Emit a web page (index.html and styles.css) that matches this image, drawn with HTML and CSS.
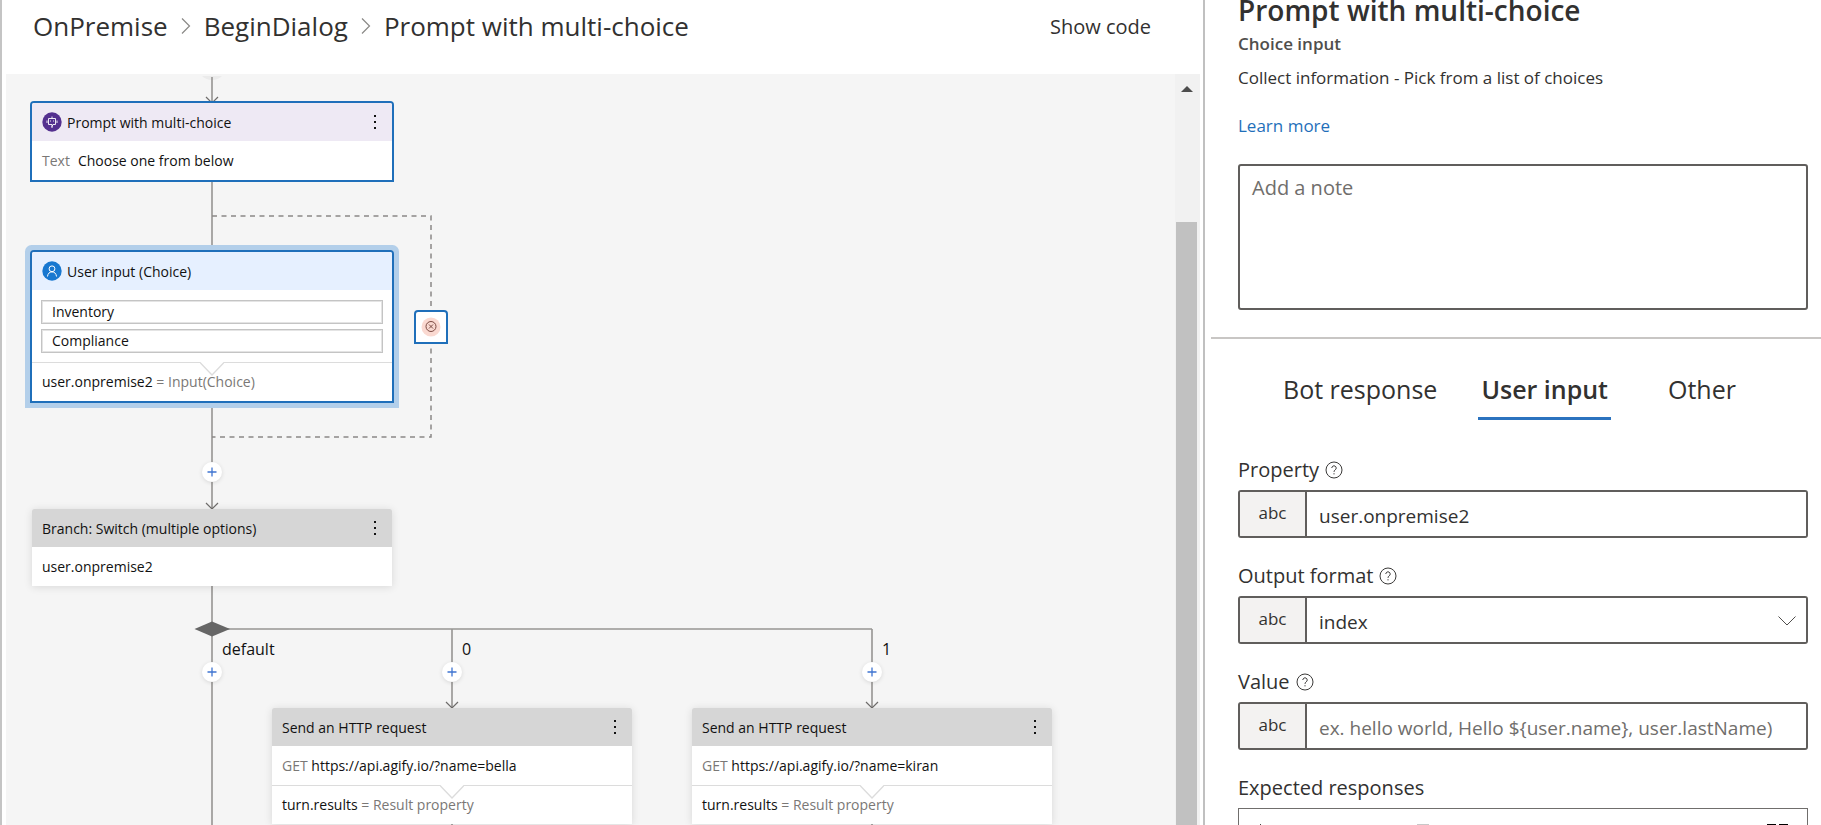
FILE: index.html
```html
<!DOCTYPE html>
<html lang="en">
<head>
<meta charset="utf-8">
<title>Prompt with multi-choice</title>
<link rel="stylesheet" href="styles.css">
</head>
<body>
<svg class="defs" aria-hidden="true">
  <symbol id="dots" viewBox="0 0 4 16"><path d="M1 1h2v2H1zM1 7h2v2H1zM1 13h2v2H1z" fill="#111"/></symbol>
  <symbol id="notch" viewBox="0 0 24 14"><path d="M0 0H24L12 13z" fill="#fff"/><path d="M0 .5L12 13L24 .5" fill="none" stroke="#dcdcdc" stroke-width="1.3"/></symbol>
  <symbol id="help" viewBox="0 0 18 18"><circle cx="9" cy="9" r="8" fill="none" stroke="#3b3a39"/><path d="M6.8 7a2.2 2.2 0 1 1 3.5 1.8C9.400 9.400 9 9.800 9 10.900M9 12.200v1.200" fill="none" stroke="#3b3a39"/></symbol>
  <symbol id="plus" viewBox="0 0 10 10"><path d="M5 .5v9M.5 5h9" stroke="#3f74d1" stroke-width="1.3"/></symbol>
  <symbol id="chevron" viewBox="0 0 10 18"><path d="M1 1.500L8.500 9L1 16.500" fill="none" stroke="#8a8886" stroke-width="1.200"/></symbol>
</svg>
<div class="app">
  <main class="editor">
    <header class="topbar">
      <nav class="crumbs" aria-label="Breadcrumb">
        <a href="#">OnPremise</a>
        <svg class="chevron"><use href="#chevron"/></svg>
        <a href="#">BeginDialog</a>
        <svg class="chevron"><use href="#chevron"/></svg>
        <a href="#">Prompt with multi-choice</a>
      </nav>
      <button class="showcode" type="button">Show code</button>
    </header>
    <div class="canvas">
      <div class="flow">
        <svg class="wires" viewBox="6 74 1100 751" width="1100" height="751" aria-hidden="true">
          <path d="M202 76h20q-4 4-10 4t-10-4z" fill="#ebebeb"/>
          <g fill="none" stroke="#979593" stroke-width="1.6">
            <path d="M212 77V101M212 182V252M212 401V509M212 586V825M212 629H872M452 629V708M872 629V708M452 823v2M872 823v2"/>
            <path d="M206 97l6 6l6-6M206 503l6 6l6-6M446 702l6 6l6-6M866 702l6 6l6-6" stroke="#706e6c" stroke-width="1.2"/>
            <path d="M212 216H431V437H212" stroke="#8a8886" stroke-dasharray="5 4.500" stroke-width="1.500"/>
          </g>
          <path d="M194.500 629L212 621.500L230 629L212 636.500z" fill="#666"/>
        </svg>

        <article class="node selected n-prompt">
          <div class="head purple">
            <svg class="badge" viewBox="0 0 20 20"><circle cx="10" cy="10" r="9.700" fill="#54308f"/><g fill="none" stroke="#fff" stroke-width=".9"><path d="M6.500 6.500h7v6h-2.500L10 14.500v-2H6.500zM10 6.500V4.500M5 8.500v2.500M15 8.500v2.500M10 14v2M8.500 8.500v1M11.500 8.500v1"/></g></svg>
            <span>Prompt with multi-choice</span>
            <button class="menu" type="button" aria-label="More options"><svg><use href="#dots"/></svg></button>
          </div>
          <p class="row"><span class="dim wide">Text</span>Choose one from below</p>
        </article>

        <article class="node selected focused n-input">
          <div class="head blue">
            <svg class="badge" viewBox="0 0 20 20"><circle cx="10" cy="10" r="9.700" fill="#1878d0"/><g fill="none" stroke="#fff" stroke-width="1"><circle cx="10" cy="7.800" r="2.900"/><path d="M5.500 15.500c.3-3 2-4.600 4.500-4.600s4.200 1.600 4.500 4.600"/></g></svg>
            <span>User input (Choice)</span>
          </div>
          <ul class="choices"><li>Inventory</li><li>Compliance</li></ul>
          <p class="row foot"><svg class="notch"><use href="#notch"/></svg>user.onpremise2 <span class="dim">= Input(Choice)</span></p>
        </article>

        <button class="node selected n-error" type="button" aria-label="Invalid prompt">
          <svg viewBox="0 0 20 20"><circle cx="10" cy="10" r="9.500" fill="#fad9d1"/><g fill="none" stroke="#7a4a42" stroke-width="1"><circle cx="10" cy="9.500" r="5"/><path d="M8 7.500l4 4M12 7.500l-4 4"/></g></svg>
        </button>

        <article class="node n-switch">
          <div class="head gray"><span>Branch: Switch (multiple options)</span>
            <button class="menu" type="button" aria-label="More options"><svg><use href="#dots"/></svg></button></div>
          <p class="row">user.onpremise2</p>
        </article>

        <button class="add a-main" type="button" aria-label="Add"><svg><use href="#plus"/></svg></button>
        <button class="add a-default" type="button" aria-label="Add"><svg><use href="#plus"/></svg></button>
        <button class="add a-zero" type="button" aria-label="Add"><svg><use href="#plus"/></svg></button>
        <button class="add a-one" type="button" aria-label="Add"><svg><use href="#plus"/></svg></button>
        <span class="case c-default">default</span>
        <span class="case c-zero">0</span>
        <span class="case c-one">1</span>

        <article class="node n-bella">
          <div class="head gray"><span>Send an HTTP request</span>
            <button class="menu" type="button" aria-label="More options"><svg><use href="#dots"/></svg></button></div>
          <p class="row"><span class="dim">GET</span> https://api.agify.io/?name=bella</p>
          <p class="row foot"><svg class="notch"><use href="#notch"/></svg>turn.results <span class="dim">= Result property</span></p>
        </article>
        <article class="node n-kiran">
          <div class="head gray"><span>Send an HTTP request</span>
            <button class="menu" type="button" aria-label="More options"><svg><use href="#dots"/></svg></button></div>
          <p class="row"><span class="dim">GET</span> https://api.agify.io/?name=kiran</p>
          <p class="row foot"><svg class="notch"><use href="#notch"/></svg>turn.results <span class="dim">= Result property</span></p>
        </article>
      </div>
      <div class="scrollbar" aria-hidden="true">
        <svg class="up" viewBox="0 0 12 6"><path d="M0 6L6 0L12 6z" fill="#4d4d4d"/></svg>
        <div class="thumb"></div>
      </div>
    </div>
  </main>

  <aside class="panel">
    <section class="intro">
      <h1>Prompt with multi-choice</h1>
      <h2>Choice input</h2>
      <p>Collect information - Pick from a list of choices</p>
      <a class="learn" href="#">Learn more</a>
      <textarea class="note" placeholder="Add a note" aria-label="Add a note"></textarea>
    </section>
    <div class="tabs" role="tablist">
      <button type="button" role="tab">Bot response</button>
      <button type="button" role="tab" class="active" aria-selected="true">User input</button>
      <button type="button" role="tab">Other</button>
    </div>
    <form class="form">
      <div class="field">
        <div class="label"><label for="property">Property</label><svg><use href="#help"/></svg></div>
        <div class="box"><span class="type">abc</span><input id="property" type="text" value="user.onpremise2"></div>
      </div>
      <div class="field">
        <div class="label"><label for="format">Output format</label><svg><use href="#help"/></svg></div>
        <div class="box"><span class="type">abc</span><select id="format"><option>index</option><option>value</option></select>
          <svg class="caret" viewBox="0 0 18 10"><path d="M.5 .5L9 9L17.500 .5" fill="none" stroke="#504e4c"/></svg></div>
      </div>
      <div class="field">
        <div class="label"><label for="value">Value</label><svg><use href="#help"/></svg></div>
        <div class="box"><span class="type">abc</span><input id="value" type="text" placeholder="ex. hello world, Hello ${user.name}, user.lastName)"></div>
      </div>
      <div class="field">
        <div class="label"><span>Expected responses</span></div>
        <div class="responses">
          <svg class="tool left" viewBox="0 0 172 16"><path d="M2 0h1v12H2z" fill="#444"/><path d="M159 0h12v12h-12z" fill="#c8c8c8"/></svg>
          <svg class="tool" viewBox="0 0 22 22"><path d="M0 0h9v9H0zM12 0h9v9h-9zM0 12h9v9H0zM12 12h9v9h-9z"/></svg>
        </div>
      </div>
    </form>
  </aside>
</div>
</body>
</html>
```
FILE: styles.css
```css
* { box-sizing: border-box; }
body { margin: 0; font-family: "Open Sans", "Noto Sans", sans-serif; color: #323130; background: #fff; }
button, input, select, textarea { font: inherit; color: inherit; }
button { padding: 0; border: 0; background: none; }
a { color: inherit; text-decoration: none; }
h1, h2, p, ul { margin: 0; padding: 0; }
svg { display: block; flex: none; }
.defs { position: absolute; width: 0; height: 0; }

.app { display: grid; grid-template-columns: 1203fr 618fr; height: 100vh; overflow: hidden; }

.editor { display: flex; flex-direction: column; min-width: 0; border-left: 2px solid #c4c4c4; padding: 0 3px 0 4px; }
.topbar { display: flex; align-items: center; justify-content: space-between; flex: none; height: 74px; padding: 0 49px 22px 27px; }
.crumbs { display: flex; align-items: center; font-size: 26px; line-height: 32px; }
.chevron { width: 10px; height: 18px; margin: 0 13px; }
.showcode { font-size: 20px; }

.canvas { display: flex; flex: 1; min-height: 0; background: #f5f5f5; }
.flow { position: relative; flex: 1; min-width: 0; overflow: hidden; font-size: 14px; color: #111; }
.wires { position: absolute; left: 0; top: 0; }
.scrollbar { display: flex; flex-direction: column; align-items: center; flex: none; width: 25px; padding: 12px 2px 0 0; background: #f1f1f1; }
.up { width: 12px; height: 6px; }
.thumb { flex: 1; width: 21px; margin-top: 130px; background: #c1c1c1; }

.node { position: absolute; width: 360px; background: #fff; border-radius: 2px 2px 0 0; box-shadow: 0 1px 8px rgba(0, 0, 0, .12); }
.selected { border-radius: 2px 2px 0 0; box-shadow: 0 0 0 2px #1f6fba; }
.focused { box-shadow: 0 0 0 2px #1f6fba, 0 0 0 7px #b3cfea; }
.head { display: flex; align-items: center; height: 38px; padding: 0 10px; border-radius: 2px 2px 0 0; }
.purple { background: #eee9f4; }
.blue { background: #e6f0ff; }
.gray { background: #d6d6d6; }
.badge { width: 20px; height: 20px; margin-right: 5px; }
.menu { display: flex; justify-content: center; width: 14px; margin-left: auto; }
.menu svg { width: 4px; height: 16px; }
.row { position: relative; height: 39px; padding: 0 10px; line-height: 39px; white-space: nowrap; }
.foot { border-top: 1px solid #dcdcdc; line-height: 38px; }
.notch { position: absolute; left: 168px; top: -1px; width: 24px; height: 14px; }
.dim { color: #7a7876; }
.wide { margin-right: 8px; }
.choices { display: grid; gap: 5px; padding: 10px 9px 9px; list-style: none; }
.choices li { height: 24px; padding: 0 10px; border: 1px solid #c4c4c4; outline: 1px solid #e4e4e4; outline-offset: -2px; line-height: 22px; }

.n-prompt { left: 26px; top: 29px; }
.n-input { left: 26px; top: 178px; }
.n-error { display: grid; place-items: center; left: 410px; top: 238px; width: 30px; height: 30px; }
.n-error svg { width: 20px; height: 20px; }
.n-switch { left: 26px; top: 435px; }
.n-bella { left: 266px; top: 634px; }
.n-kiran { left: 686px; top: 634px; }

.add { position: absolute; display: grid; place-items: center; width: 20px; height: 20px; border-radius: 50%; background: #fff; box-shadow: 0 1px 4px rgba(0, 0, 0, .12); }
.add svg { width: 10px; height: 10px; }
.a-main { left: 196px; top: 388px; }
.a-default { left: 196px; top: 588px; }
.a-zero { left: 436px; top: 588px; }
.a-one { left: 856px; top: 588px; }
.case { position: absolute; top: 564px; font-size: 16px; line-height: 22px; }
.c-default { left: 216px; }
.c-zero { left: 456px; }
.c-one { left: 876px; }

.panel { min-width: 0; overflow: hidden; border-left: 2px solid #c0c0c0; padding-left: 6px; }
.intro { display: flex; flex-direction: column; align-items: flex-start; padding: 0 13px 27px 27px; border-bottom: 2px solid #c8c6c4; font-size: 17px; line-height: 24px; }
h1 { font-size: 28px; font-weight: 600; line-height: 20px; }
h2 { margin-top: 12px; font-size: 17px; font-weight: 600; line-height: 24px; color: #504e4c; }
.intro p { margin-top: 10px; }
.learn { margin-top: 24px; color: #1f6fba; }
.note { width: 100%; height: 146px; margin-top: 26px; padding: 8px 12px; border: 2px solid #605e5c; border-radius: 3px; font-size: 20px; line-height: 28px; resize: none; }
::placeholder { color: #706e6c; opacity: 1; }
.tabs { display: flex; gap: 41px; padding: 26px 0 0 72px; font-size: 25px; line-height: 48px; }
.tabs button { height: 55px; padding: 0 0 7px; }
.tabs .active { padding: 0 3px 4px; margin-right: 16px; border-bottom: 3px solid #2b73bf; font-weight: 600; }
.form { padding: 38px 13px 0 27px; font-size: 19px; }
.field { margin-bottom: 26px; }
.label { display: flex; align-items: center; gap: 6px; height: 24px; margin-bottom: 8px; font-size: 20px; line-height: 24px; }
.label svg { width: 18px; height: 18px; }
.box { position: relative; display: flex; height: 48px; border: 2px solid #605e5c; border-radius: 3px; overflow: hidden; }
.type { flex: none; width: 67px; border-right: 2px solid #605e5c; background: #f3f2f1; font-size: 17px; line-height: 42px; text-align: center; }
.box input, .box select { flex: 1; min-width: 0; border: 0; padding: 4px 12px 0; background: #fff; appearance: none; outline: 0; }
.caret { position: absolute; right: 10px; top: 18px; width: 18px; height: 10px; pointer-events: none; }
.responses { display: flex; justify-content: space-between; height: 180px; padding: 15px 18px 0 19px; border: 1px solid #706e6c; }
.tool { width: 22px; height: 22px; }
.left { width: 172px; height: 16px; }
```
